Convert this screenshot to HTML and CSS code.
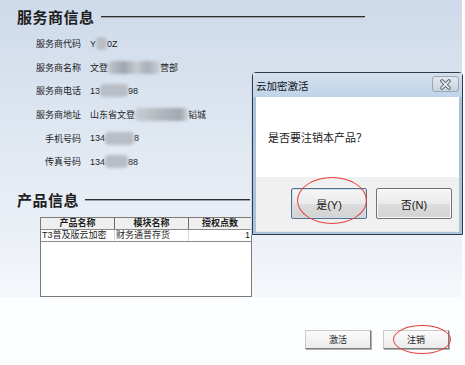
FILE: index.html
```html
<!DOCTYPE html>
<html lang="zh-CN">
<head>
    <meta charset="UTF-8">
    <title>云加密激活</title>
    <link rel="stylesheet" href="styles.css">
</head>
<body>

    <div class="window">
        <div class="section-title wide"><span>服务商信息</span></div>

        <div class="info">
            <span class="label">服务商代码</span>
            <span class="value">Y<i class="mask m1"></i>0Z</span>
            <span class="label">服务商名称</span>
            <span class="value">文登<i class="mask m2"></i>营部</span>
            <span class="label">服务商电话</span>
            <span class="value">13<i class="mask m3"></i>98</span>
            <span class="label">服务商地址</span>
            <span class="value">山东省文登<i class="mask m4"></i>韬城</span>
            <span class="label">手机号码</span>
            <span class="value">134<i class="mask m5"></i>8</span>
            <span class="label">传真号码</span>
            <span class="value">134<i class="mask m6"></i>88</span>
        </div>

        <div class="section-title narrow"><span>产品信息</span></div>

        <div class="grid-box">
            <table class="grid">
                <tr>
                    <th class="c1">产品名称</th>
                    <th class="c2">模块名称</th>
                    <th class="c3">授权点数</th>
                </tr>
                <tr>
                    <td>T3普及版云加密</td>
                    <td>财务通普存货</td>
                    <td class="num">1</td>
                </tr>
            </table>
        </div>
    </div>

    <div class="actions">
        <button class="btn">激活</button>
        <button class="btn">注销</button>
    </div>

    <!-- message box on top of the window -->
    <div class="dialog">
        <div class="dialog-title">
            <span>云加密激活</span>
            <span class="close-btn">
                <svg width="13" height="11" viewBox="0 0 13 11">
                    <path d="M3 2 L10 9 M10 2 L3 9" stroke="#5f6b7a" stroke-width="3.6" stroke-linecap="round"/>
                    <path d="M3 2 L10 9 M10 2 L3 9" stroke="#f4f6f8" stroke-width="1.6" stroke-linecap="round"/>
                </svg>
            </span>
        </div>
        <div class="dialog-body">是否要注销本产品？</div>
        <div class="dialog-footer">
            <button class="dlg-btn default">是(Y)</button>
            <button class="dlg-btn">否(N)</button>
        </div>
    </div>

    <!-- red marks drawn over the screenshot -->
    <span class="mark mark-yes"></span>
    <span class="mark mark-cancel"></span>

</body>
</html>
```

FILE: styles.css
```css
/* Page */
body {
    margin: 0;
    width: 465px;
    height: 365px;
    overflow: hidden;
    background-color: #fcfdfe;
    font-family: "Liberation Sans", "Noto Sans CJK SC", sans-serif;
    color: #1c1c1c;
    position: relative;
}

.window {
    width: 462px;
    height: 297px;
    box-sizing: border-box;
    padding-top: 6px;
    background: linear-gradient(to bottom, #cedaea 0%, #dfe7f1 45%, #eef2f8 85%, #f5f8fb 100%);
}

/* Section headings with rule */
.section-title {
    display: flex;
    align-items: center;
    padding-left: 17px;
    height: 20px;
    font-size: 15px;
    font-weight: bold;
    letter-spacing: 0.5px;
    color: #202020;
}

.section-title::after {
    content: "";
    flex: 1;
    height: 1px;
    margin-left: 6px;
    background-color: #2e2e2e;
    box-shadow: 0 1px 0 #9aa3ae;
}

.section-title.wide {
    width: 348px;
}

.section-title.narrow {
    width: 233px;
    margin-top: 16px;
}

/* Provider info */
.info {
    display: grid;
    grid-template-columns: 81px auto;
    grid-auto-rows: 23.6px;
    column-gap: 9px;
    align-items: center;
    margin-top: 6px;
    font-size: 9px;
}

.label {
    text-align: right;
}

.value {
    display: flex;
    align-items: center;
}

.mask {
    display: inline-block;
    height: 13px;
    background-color: #b9bec6;
    border-radius: 4px;
    filter: blur(1.5px);
}

.m1 { width: 11px; }
.m2 { width: 52px; background: linear-gradient(to right, #c3c7cd, #9fa5ae 30%, #c8ccd2 55%, #a8aeb7 75%, #cdd1d6); }
.m3 { width: 28px; }
.m4 { width: 53px; background: linear-gradient(to right, #c8ccd2, #b2b7bf 50%, #a2a8b1 85%, #cfd3d8); }
.m5 { width: 29px; }
.m6 { width: 23px; }

/* Product grid */
.grid-box {
    margin: 7px 0 0 40px;
    width: 212px;
    height: 80px;
    box-sizing: border-box;
    border: 1px solid #7a7a7a;
    background-color: #fff;
}

.grid {
    border-collapse: collapse;
    width: 100%;
    font-size: 9px;
    line-height: 11px;
}

.grid th {
    background-color: #efefef;
    font-weight: bold;
    border-right: 1px solid #6a6a6a;
    border-bottom: 1px solid #8a8a8a;
    padding: 0;
    height: 11px;
}

.grid th:last-child,
.grid td:last-child {
    border-right: none;
}

.grid td {
    padding: 0 1px;
    border-right: 1px solid #d8d8d8;
    border-bottom: 1px solid #8a8a8a;
    white-space: nowrap;
}

.grid .c1 { width: 73px; }
.grid .c2 { width: 73px; }

.grid .num {
    text-align: right;
}

/* Bottom buttons */
.actions {
    display: flex;
    justify-content: flex-end;
    gap: 12px;
    padding: 33px 16px 0 0;
}

.btn {
    width: 66px;
    height: 19px;
    padding: 0;
    font-family: inherit;
    font-size: 9px;
    color: #1c1c1c;
    background: linear-gradient(to bottom, #fbfbfb, #ebebeb);
    border: 1px solid #c9c9c9;
    border-right-color: #7d7d7d;
    border-bottom-color: #7d7d7d;
    box-shadow: 1px 1px 0 #b0b0b0;
}

/* Message box */
.dialog {
    position: absolute;
    left: 252px;
    top: 72px;
    width: 211px;
    height: 163px;
    box-sizing: border-box;
    border: 1px solid #2f3b47;
    border-radius: 4px 4px 0 0;
    background-color: #a9c3de;
    padding: 0 3px 2px 3px;
    display: flex;
    flex-direction: column;
    box-shadow: -1px 0 0 #d0d8e0;
}

.dialog-title {
    height: 24px;
    display: flex;
    align-items: center;
    justify-content: space-between;
    font-size: 10.5px;
    color: #111;
    padding-left: 3px;
    background: linear-gradient(to bottom, #d3e0ef, #c0d3e9);
    margin: 0 -3px;
    padding-right: 3px;
}

.close-btn {
    width: 27px;
    height: 16px;
    box-sizing: border-box;
    display: flex;
    align-items: center;
    justify-content: center;
    border: 1px solid #9aa7b7;
    border-radius: 3px;
    background: linear-gradient(to bottom, #e3e8ee, #c9d2dc);
    margin-top: -2px;
}

.dialog-body {
    height: 80px;
    display: flex;
    align-items: center;
    padding-left: 12px;
    background-color: #fff;
    font-size: 11px;
    color: #1a1a1a;
}

.dialog-footer {
    flex: 1;
    display: flex;
    justify-content: flex-end;
    align-items: flex-start;
    gap: 9px;
    padding: 11px 7px 0 0;
    background-color: #f0f0f0;
    border-bottom: 1px solid #e8e8e8;
}

.dlg-btn {
    width: 76px;
    height: 31px;
    padding: 0;
    font-family: inherit;
    font-size: 11px;
    color: #1a1a1a;
    border: 1px solid #707070;
    border-radius: 2px;
    background: linear-gradient(to bottom, #f6f6f6 0%, #ebebeb 50%, #dddddd 51%, #d2d2d2 100%);
    box-shadow: inset 0 0 0 1px #fbfbfb;
}

.dlg-btn.default {
    border-color: #5b6e84;
    box-shadow: inset 0 0 0 1px #c6dff2;
}

/* Red annotation ellipses */
.mark {
    position: absolute;
    border: 1px solid #e8403f;
    border-radius: 50%;
}

.mark-yes {
    left: 297px;
    top: 177px;
    width: 68px;
    height: 45px;
}

.mark-cancel {
    left: 393px;
    top: 325px;
    width: 56px;
    height: 27px;
}
```
